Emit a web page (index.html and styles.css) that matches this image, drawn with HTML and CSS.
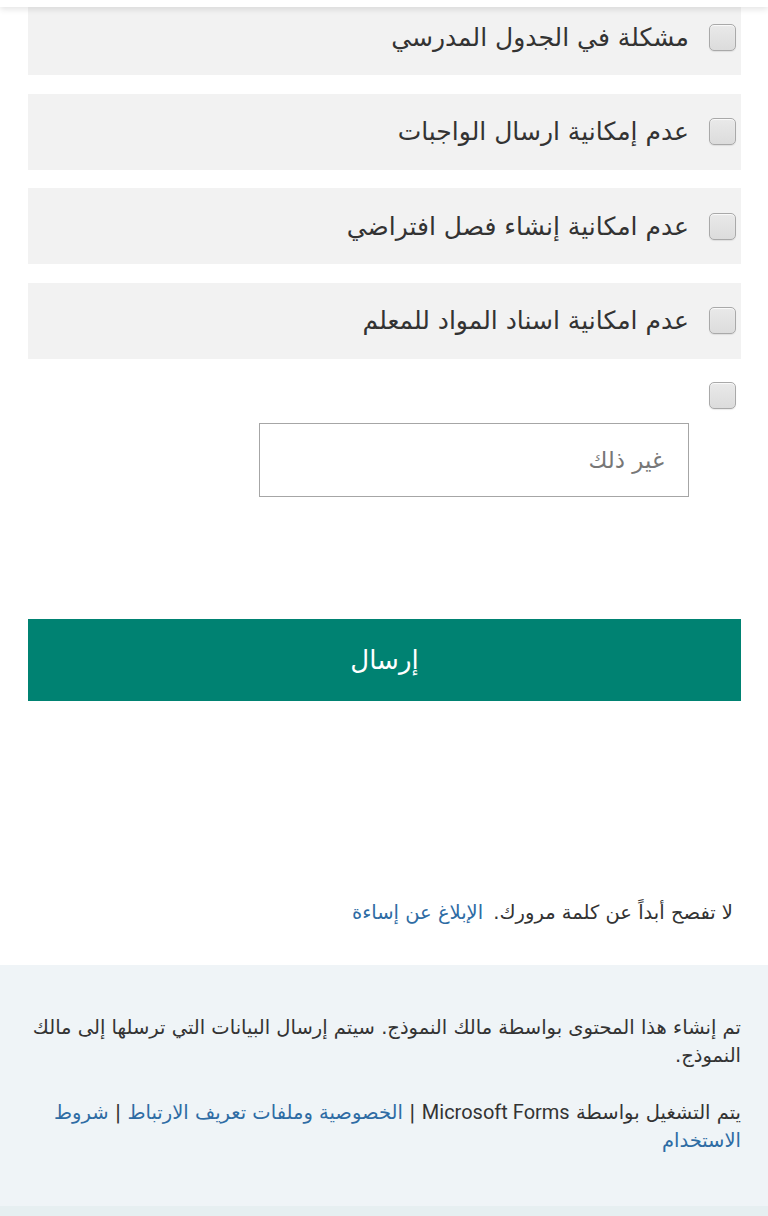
FILE: index.html
```html
<!DOCTYPE html>
<html lang="ar" dir="rtl">
<head>
<meta charset="utf-8">
<title>نموذج</title>
<link rel="stylesheet" href="styles.css">
</head>
<body>
<div class="topbar"></div>
<main class="form">
  <div class="choices">
    <label class="choice first"><span class="box"></span><span class="label">مشكلة في الجدول المدرسي</span></label>
    <label class="choice"><span class="box"></span><span class="label">عدم إمكانية ارسال الواجبات</span></label>
    <label class="choice"><span class="box"></span><span class="label">عدم امكانية إنشاء فصل افتراضي</span></label>
    <label class="choice"><span class="box"></span><span class="label">عدم امكانية اسناد المواد للمعلم</span></label>
    <div class="other">
      <span class="box"></span>
      <div class="other-input">غير ذلك</div>
    </div>
  </div>
  <button class="submit">إرسال</button>
  <p class="notice">لا تفصح أبداً عن كلمة مرورك. <a class="link" href="#">الإبلاغ عن إساءة</a></p>
</main>
<footer class="footer">
  <p>تم إنشاء هذا المحتوى بواسطة مالك النموذج. سيتم إرسال البيانات التي ترسلها إلى مالك النموذج.</p>
  <p>يتم التشغيل بواسطة <span class="latin">Microsoft Forms</span> | <a class="link" href="#">الخصوصية وملفات تعريف الارتباط</a> | <a class="link" href="#">شروط الاستخدام</a></p>
</footer>
<div class="bottom-strip"></div>
</body>
</html>
```

FILE: styles.css
```css
* { box-sizing: border-box; }
html, body { margin: 0; padding: 0; }
body {
  background: #ffffff;
  font-family: "DejaVu Sans", sans-serif;
  color: #333333;
  direction: rtl;
}
.topbar {
  position: fixed;
  top: 0; left: 0; right: 0;
  height: 7px;
  background: #ffffff;
  box-shadow: 0 2px 6px rgba(0,0,0,0.12);
  z-index: 5;
}
.form { padding: 0 27px 0 28px; }
.choices { display: flex; flex-direction: column; gap: 18.5px; }
.choice {
  display: flex;
  align-items: center;
  gap: 20px;
  height: 76px;
  background: #f2f2f2;
  padding-right: 5px;
  font-size: 25px;
  color: #333333;
}
.choice.first { height: 75px; }
.box {
  width: 27px; height: 27px;
  border: 1px solid #a9a9a9;
  border-radius: 5px;
  background: linear-gradient(#e9e9e9, #dcdcdc);
  box-shadow: inset 0 1px 1px rgba(255,255,255,0.8), 0 1px 1px rgba(0,0,0,0.08);
  flex: none;
}
.other {
  display: flex;
  flex-direction: column;
  align-items: flex-start;
  padding-right: 5px;
  padding-top: 5px;
}
.other-input {
  margin-top: 14px;
  margin-right: 47px;
  width: 430px;
  height: 74px;
  border: 1px solid #a6a6a6;
  background: #fff;
  display: flex;
  align-items: center;
  padding-right: 24px;
  font-size: 23px;
  color: #777777;
}
.submit {
  display: block;
  width: 100%;
  height: 82px;
  margin-top: 122px;
  border: none;
  background: #008272;
  color: #ffffff;
  font-family: inherit;
  font-size: 26px;
}
.notice {
  margin: 198px 0 0 0;
  padding-right: 8px;
  font-size: 19.5px;
  line-height: 28px;
  color: #333;
}
.link { color: #2e6ca4; text-decoration: none; }
.notice .link { margin-right: 4px; }
.latin { font-family: Roboto, "DejaVu Sans", sans-serif; font-size: 20px; }
.footer {
  margin-top: 38px;
  background: #eff4f7;
  padding: 49px 27px 51px 30px;
  font-size: 19.5px;
  line-height: 28px;
  color: #333;
}
.footer p { margin: 0; }
.footer p + p { margin-top: 28px; }
.bottom-strip { height: 12px; background: #e6eff1; }
```
